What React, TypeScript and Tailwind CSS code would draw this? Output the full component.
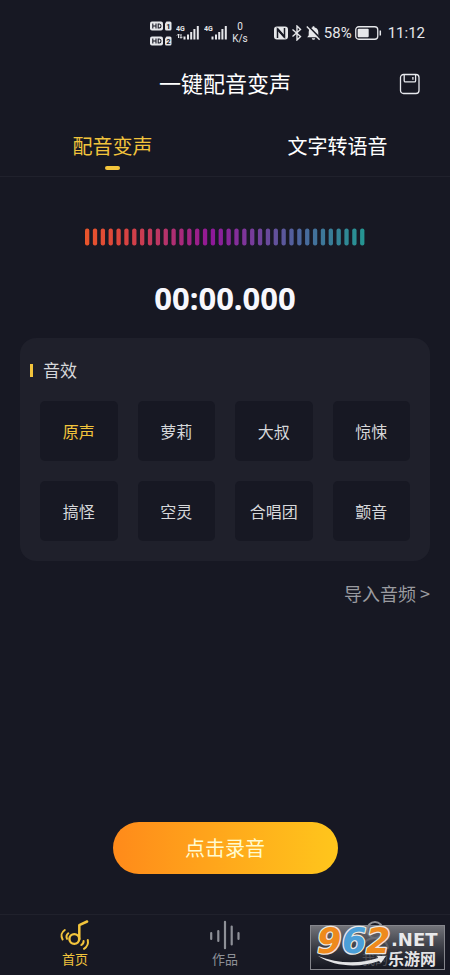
import React, { useState } from 'react';

const effects = ['原声', '萝莉', '大叔', '惊悚', '搞怪', '空灵', '合唱团', '颤音'];
const bars = Array.from({ length: 36 }, (_, i) => i);

function HdBadge({ slot }: { slot: string }) {
  return (
    <svg width="22" height="10" viewBox="0 0 22 10">
      <rect x="0" y="0.5" width="13" height="9" rx="2" fill="#e6e7ea" />
      <path d="M2.8 2.5v5M6 2.5v5M2.8 5H6M8.2 3v4h1c1.3 0 1.8-.8 1.8-2s-.5-2-1.8-2z" stroke="#171823" strokeWidth="1.1" fill="none" />
      <path d="M15 2.5 16.5.5H20A1.5 1.5 0 0 1 21.500 2V8A1.5 1.5 0 0 1 20 9.500h-3.500A1.5 1.5 0 0 1 15 8z" fill="#e6e7ea" />
      <text x="18.300" y="7.800" fontSize="7.500" fontWeight="700" textAnchor="middle" fill="#171823">{slot}</text>
    </svg>
  );
}

function Signal({ arrows = false }: { arrows?: boolean }) {
  return (
    <svg width="24" height="18" viewBox="0 0 24 18">
      <text x="0" y="7" fontSize="7" fontWeight="700" fill="#e6e7ea">4G</text>
      {arrows && <path d="M2.500 10v4M1 11.500 2.500 10 4 11.500M5 10v4M3.500 12.800 5 14.300l1.500-1.500" stroke="#e6e7ea" strokeWidth="1" fill="none" />}
      <path d="M8.500 12.500v3M12 10.500v5M15.200 8v7.500M18.400 5v10.500M21.800 2v13.500" stroke="#e6e7ea" strokeWidth="2" />
    </svg>
  );
}

function StatusBar() {
  return (
    <div className="flex h-14 items-center justify-end gap-[26px] pt-2.5 pr-[25px] font-['Roboto',sans-serif] text-[#e6e7ea]">
      <div className="flex items-center gap-1">
        <div className="flex flex-col gap-[5px]">
          <HdBadge slot="1" />
          <HdBadge slot="2" />
        </div>
        <Signal arrows />
        <Signal />
        <div className="flex flex-col items-center text-[10px] leading-3">
          <span>0</span>
          <span>K/s</span>
        </div>
      </div>
      <div className="flex items-center gap-[3px]">
        <svg width="14" height="14" viewBox="0 0 14 14">
          <rect x="0" y="0.500" width="14" height="13" rx="3" fill="#e6e7ea" />
          <path d="M3.500 12V3l7 8V2" fill="none" stroke="#171823" strokeWidth="1.500" />
          <path d="M3.500 3l7 8" stroke="#171823" strokeWidth="2" />
        </svg>
        <svg width="12" height="16" viewBox="0 0 12 16" fill="none" stroke="#e6e7ea" strokeWidth="1.400">
          <path d="M1.500 4.500 9.500 11.500 6 15V1l3.500 3.500L1.500 11.500" />
        </svg>
        <svg width="15" height="16" viewBox="0 0 15 16">
          <path d="M7.500 1.300c.7 0 1.100.5 1.100 1.100 2.300.5 3.700 2.200 3.700 4.600v3.200l1.500 2H1.200l1.500-2V7c0-2.400 1.400-4.100 3.700-4.600 0-.6.4-1.100 1.100-1.100zM5.800 13.200h3.400c-.2 1-.9 1.500-1.700 1.500s-1.500-.5-1.700-1.500z" fill="#e6e7ea" />
          <path d="M1.900.8 14.500 13.600" stroke="#171823" strokeWidth="1.800" />
          <path d="M.8 1.600 13.600 14.800" stroke="#e6e7ea" strokeWidth="1.400" />
        </svg>
        <span className="text-[15px]">58%</span>
        <svg width="27" height="14" viewBox="0 0 27 14">
          <rect x=".75" y=".75" width="22" height="12.500" rx="3" fill="none" stroke="#e6e7ea" strokeWidth="1.300" />
          <rect x="2.700" y="2.700" width="11" height="8.600" rx="1" fill="#e6e7ea" />
          <path d="M25.300 4.500v5" stroke="#e6e7ea" strokeWidth="1.500" />
        </svg>
        <span className="ml-[3px] text-[15px]">11:12</span>
      </div>
    </div>
  );
}

function Waveform() {
  return (
    <svg className="mx-auto" width="280" height="18" viewBox="0 0 280 18">
      <defs>
        <linearGradient id="wave" gradientUnits="userSpaceOnUse" x1="0" y1="0" x2="280" y2="0">
          <stop offset="0" stopColor="#e9552b" />
          <stop offset=".14" stopColor="#d9433f" />
          <stop offset=".28" stopColor="#b83468" />
          <stop offset=".45" stopColor="#8f1799" />
          <stop offset=".55" stopColor="#83309a" />
          <stop offset=".78" stopColor="#49699d" />
          <stop offset="1" stopColor="#249692" />
        </linearGradient>
      </defs>
      {bars.map((i) => (
        <rect key={i} x={i * 7.86} y="0.500" width="4.300" height="17" rx="2" fill="url(#wave)" />
      ))}
    </svg>
  );
}

function NoteIcon() {
  return (
    <svg width="32" height="32" viewBox="0 0 32 32" fill="none" stroke="#f2c43c" strokeLinecap="round" strokeLinejoin="round">
      <circle cx="15.300" cy="20" r="4.900" strokeWidth="2.400" />
      <path d="M20.300 20V6.200l7.800-3.700" strokeWidth="2.500" />
      <path d="M9.300 14.300c-1.800 1.400-2.200 3.500-1.300 5.500M5.800 11c-3.400 2.200-4.200 6-2.200 9.400" strokeWidth="2" />
      <path d="M22.300 26c1.700-1 2.400-2.300 2.300-4M25 29.800c3.200-2 4.500-5 3.800-8.800" strokeWidth="2" />
    </svg>
  );
}

function WorksIcon() {
  return (
    <svg width="32" height="32" viewBox="0 0 32 32" fill="none" stroke="#8e9097" strokeWidth="2.200" strokeLinecap="round">
      <path d="M2.200 14v6M9.300 12v10M16 2.800v26.400M22.700 7.500v18M29.500 14v6" />
    </svg>
  );
}

function MineIcon() {
  return (
    <svg width="32" height="32" viewBox="0 0 32 32" fill="none" stroke="#8e9097" strokeWidth="2" strokeLinecap="round">
      <circle cx="16" cy="11" r="8" />
      <path d="M3 29c1-6 6-10 13-10s12 4 13 10" />
    </svg>
  );
}

function SiteBadge() {
  return (
    <svg className="pointer-events-none absolute right-[5px] bottom-[5px] overflow-visible" width="135" height="45" viewBox="0 0 135 45">
      <defs>
        <linearGradient id="badge" x1="0" y1="0" x2="0" y2="1">
          <stop offset="0" stopColor="#85868b" stopOpacity=".85" />
          <stop offset=".6" stopColor="#3a3c44" stopOpacity=".75" />
          <stop offset="1" stopColor="#15171f" stopOpacity=".5" />
        </linearGradient>
      </defs>
      <rect x=".5" y=".5" width="134" height="44" fill="url(#badge)" stroke="#85868c" />
      <g fontFamily="DejaVu Sans" fontWeight="700" fontStyle="italic" fontSize="35" stroke="#ece9e4" strokeWidth="2.500" strokeLinejoin="round" paintOrder="stroke">
        <text x="7" y="28" fill="#ee8a1c">9</text>
        <text x="32" y="28" fill="#4b9fd8">6</text>
        <text x="56" y="28" fill="#ee8a1c">2</text>
      </g>
      <path d="M8 31c20 8 42 8 60 2l-1-2 9 0-5 7-2-2C49 43 25 42 8 31z" fill="#e4e4e6" />
      <text x="81" y="21" fontFamily="DejaVu Sans" fontWeight="700" fontSize="18" fill="#e9e9eb">.NET</text>
      <text x="78" y="40" fontWeight="700" fontSize="16" fill="#e4e4e6">乐游网</text>
    </svg>
  );
}

const tabs = ['配音变声', '文字转语音'];

const navItems = [
  { label: '首页', Icon: NoteIcon, active: true },
  { label: '作品', Icon: WorksIcon, active: false },
  { label: '我的', Icon: MineIcon, active: false },
];

export default function App() {
  const [tab, setTab] = useState(0);
  const [effect, setEffect] = useState('原声');

  return (
    <div className="relative flex min-h-screen flex-col bg-[#171823] font-['Noto_Sans_CJK_SC',sans-serif] text-white">
      <StatusBar />

      <header className="grid h-14 grid-cols-[1fr_auto_1fr] items-center px-[29px]">
        <h1 className="col-start-2 pb-1 text-[22px] leading-7">一键配音变声</h1>
        <button aria-label="保存" className="justify-self-end">
          <svg width="22" height="22" viewBox="0 0 22 22" fill="none" stroke="#e8e9ee" strokeWidth="1.300">
            <rect x="1.500" y="1.500" width="18.500" height="19" rx="3" />
            <path d="M5.200 1.500v6.200c0 .8.400 1.200 1.200 1.200h9c.8 0 1.200-.4 1.200-1.200V1.500M13.900 4v2.800" />
          </svg>
        </button>
      </header>

      {/* Tabs */}
      <div className="grid grid-cols-2 border-b border-[#20212c]">
        {tabs.map((label, idx) => (
          <button
            key={label}
            onClick={() => setTab(idx)}
            className={`flex h-16 flex-col items-center pt-5 text-xl leading-7 ${tab === idx ? 'text-[#f2c43c]' : 'text-white'}`}
          >
            {label}
            {tab === idx && <span className="mt-1.5 h-1 w-[15px] rounded-sm bg-[#f2c43c]" />}
          </button>
        ))}
      </div>

      <main className="flex flex-1 flex-col px-5 pt-[51px] pb-10">
        <Waveform />
        <p className="mt-8 text-center font-['Noto_Sans',sans-serif] text-[31px] leading-10 font-bold text-[#f7f7fd]">00:00.000</p>

        {/* Sound effects */}
        <section className="mt-5 rounded-2xl bg-[#1f202b] pb-5">
          <div className="flex h-11 items-center gap-2.5 pt-5 pl-2.5">
            <span className="h-[13px] w-[3px] bg-[#f2c43c]" />
            <h2 className="text-[17px] leading-6 text-[#d6d7da]">音效</h2>
          </div>
          <div className="mt-[19px] grid grid-cols-4 gap-5 px-5">
            {effects.map((name) => (
              <button
                key={name}
                onClick={() => setEffect(name)}
                className={`h-[60px] rounded-[5px] bg-[#171823] text-base ${effect === name ? 'text-[#f2c43c]' : 'text-[#d6d7da]'}`}
              >
                {name}
              </button>
            ))}
          </div>
        </section>

        <a href="#import" className="mt-5 self-end text-lg leading-6 text-[#9a9ba0]">导入音频 &gt;</a>

        <button className="mx-auto mt-auto h-13 w-[225px] rounded-full bg-linear-to-r from-[#ff8a1a] to-[#ffc61c] text-xl text-[#fffbd0]">
          点击录音
        </button>
      </main>

      <nav className="grid h-[61px] grid-cols-3 border-t border-[#20212c]">
        {navItems.map(({ label, Icon, active }) => (
          <a
            key={label}
            href="#nav"
            className={`flex flex-col items-center pt-1 text-[13px] leading-4 ${active ? 'text-[#f2c43c]' : 'text-[#8e9097]'}`}
          >
            <Icon />
            {label}
          </a>
        ))}
      </nav>
      <SiteBadge />
    </div>
  );
}
